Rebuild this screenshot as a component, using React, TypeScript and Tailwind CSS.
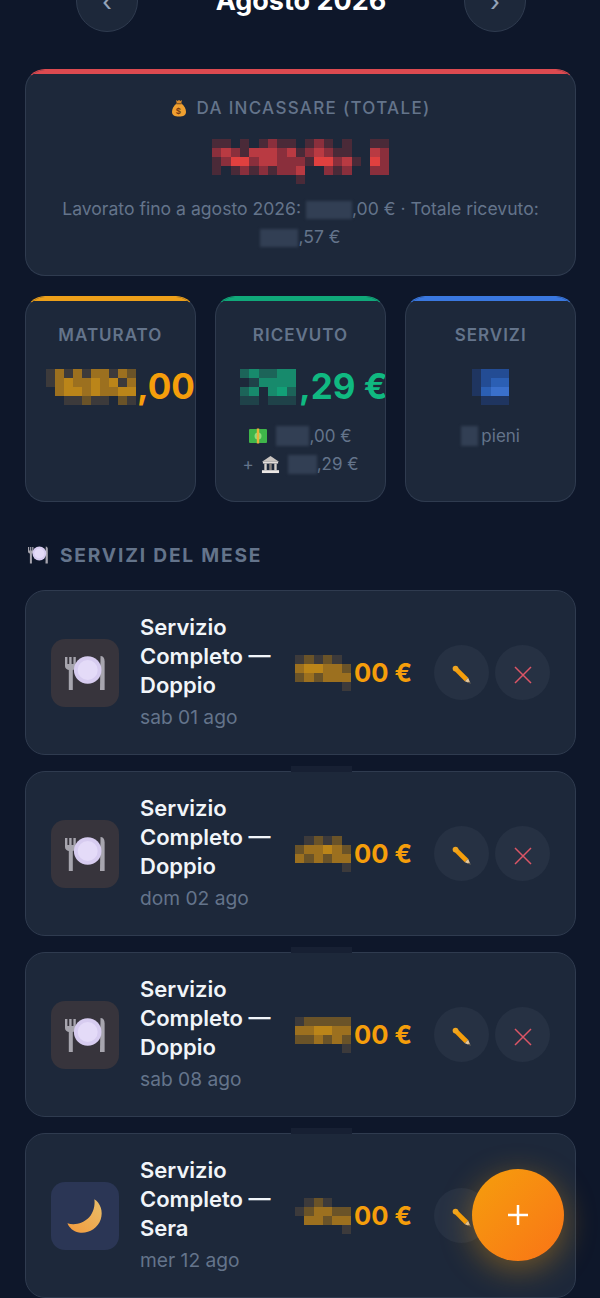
const orange = ["transparent", "#3c3a3b", "#6a5328", "#9c701f", "#bb8519"];
const red = ["transparent", "#4a2a38", "#8a2f3c", "#b93a42", "#e0403f"];
const green = ["transparent", "#1f4249", "#1c6459", "#178a6c", "#12a077"];
const blue = ["transparent", "#1f3560", "#234c94", "#2b5fb4", "#3a70cc"];

function Pixels({ rows, palette, narrow }: { rows: string[]; palette: string[]; narrow?: boolean }) {
  return (
    <span className="inline-flex flex-col align-middle blur-[0.4px]">
      {rows.map((row, i) => (
        <span key={i} className="flex">
          {row.split("").map((c, j) => (
            <span key={j} className={narrow ? "w-[9px] h-[9px]" : "w-[9.3px] h-[9px]"} style={{ backgroundColor: palette[Number(c)] }} />
          ))}
        </span>
      ))}
    </span>
  );
}

function Mask({ className }: { className: string }) {
  return <span className={`inline-block align-middle bg-[#323f54] blur-[1.5px] ${className}`} />;
}

function MoneyBag() {
  return (
    <svg viewBox="0 0 16 18" className="w-[16px] h-[18px] inline-block align-middle">
      <path d="M5.5 4.5C2.5 7 1 10 1 13c0 3.200 2.500 4.500 7 4.500s7-1.300 7-4.500c0-3-1.500-6-4.500-8.500z" fill="#f0a030" />
      <path d="M5 1l1.500 1L8 1l1.500 1L11 1l-.8 3.500H5.800z" fill="#d98a2b" />
      <rect x="5.300" y="4" width="5.400" height="1.300" fill="#8a5a20" />
      <text x="8" y="15" textAnchor="middle" fontSize="8" fontWeight="700" fill="#7a3d10">$</text>
    </svg>
  );
}

function Banknote() {
  return (
    <svg viewBox="0 0 18 16" className="w-[18px] h-[16px] inline-block align-middle">
      <rect x="0" y="1" width="18" height="14" rx="1" fill="#3fb54a" />
      <circle cx="9" cy="8" r="3.500" fill="#8fdc7c" />
      <rect x="7.800" y="0.500" width="2.400" height="15" fill="#e8b23a" />
    </svg>
  );
}

function Bank() {
  return (
    <svg viewBox="0 0 20 20" className="w-[19px] h-[19px] inline-block align-middle">
      <path d="M10 1L1 7h18z" fill="#c9c4c0" />
      <rect x="2" y="7" width="16" height="2" fill="#e3dedb" />
      <rect x="3.500" y="9" width="2.500" height="7" fill="#d5d0cc" />
      <rect x="8.700" y="9" width="2.600" height="7" fill="#8a8480" />
      <rect x="14" y="9" width="2.500" height="7" fill="#d5d0cc" />
      <rect x="1" y="16" width="18" height="3" fill="#ece8e5" />
    </svg>
  );
}

function Plate({ className }: { className: string }) {
  return (
    <svg viewBox="0 0 40 34" className={className}>
      <path d="M0 1h2.400v7h1.800V1h2.400v7h1.800V1h2.400v9c0 2-1.200 3.500-3 4v20H3.800V14c-2.400-.5-3.800-2-3.800-4z" fill="#a7a5ae" />
      <path d="M35.500 0c2.700 0 4.100 2 4.100 5v29h-4.600z" fill="#a7a5ae" />
      <circle cx="22.700" cy="14" r="13.800" fill="#d7ccf0" />
      <circle cx="22.700" cy="14" r="10" fill="#e4dbf8" />
    </svg>
  );
}

function Moon() {
  return (
    <svg viewBox="75 85 125 120" className="w-[40px] h-[38px]">
      <defs>
        <linearGradient id="moon" x1="1" y1="0" x2="0" y2="1">
          <stop offset="0" stopColor="#e9bf6a" />
          <stop offset="1" stopColor="#f49a3c" />
        </linearGradient>
      </defs>
      <path d="M167 92C186 104 196 130 187 156C177 186 146 202 118 197C100 194 88 182 82 168C105 176 132 168 150 150C164 134 170 112 167 92z" fill="url(#moon)" />
    </svg>
  );
}

function Pencil() {
  return (
    <svg viewBox="0 0 20 20" className="w-[19px] h-[19px]">
      <path d="M2.500 6L6 2.500L17 13.500L13.500 17z" fill="#f59e0b" />
      <path d="M13.500 17L17 13.500L19.500 19.500z" fill="#e8c89a" />
      <path d="M17.800 17.300L19.500 19.500L17 18.700z" fill="#3f3a35" />
      <circle cx="3.700" cy="3.700" r="3" fill="#f0a520" />
    </svg>
  );
}

function Cross() {
  return (
    <svg viewBox="0 0 18 18" className="w-[18px] h-[18px]">
      <path d="M1 1l16 16M17 1L1 17" stroke="#dc5566" strokeWidth="1.500" fill="none" />
    </svg>
  );
}

const servizi = [
  {
    nome: "Doppio",
    data: "sab 01 ago",
    pixels: ["121210", "344332", "232333", "000001"],
  },
  {
    nome: "Doppio",
    data: "dom 02 ago",
    pixels: ["012120", "233432", "323233", "000001"],
  },
  {
    nome: "Doppio",
    data: "sab 08 ago",
    pixels: ["122222", "334433", "223232", "000001"],
  },
  {
    nome: "Sera",
    data: "mer 12 ago",
    pixels: ["012100", "123322", "033233", "000001"],
  },
];

function App() {
  return (
    <div className="relative h-[1298px] overflow-hidden bg-[#0e172a] font-['Inter',sans-serif]">
      <div className="-mt-[30px] pl-[25px] pr-[24px]">
        {/* header mese */}
        <div className="flex items-center justify-between pl-[51px] pr-[50px]">
          <button className="w-[62px] h-[62px] rounded-full bg-[#1d283a] border border-[#2f3b4f] text-[#94a3b8] text-[26px]">‹</button>
          <h1 className="text-[27px] font-bold text-white">Agosto 2026</h1>
          <button className="w-[62px] h-[62px] rounded-full bg-[#1d283a] border border-[#2f3b4f] text-[#94a3b8] text-[26px]">›</button>
        </div>

        {/* totale */}
        <div className="relative mt-[37px] h-[207px] overflow-hidden rounded-[20px] bg-[#1d283a] border border-[#2f3b4f] border-t-[#dc4a50] px-[25px] pt-[26px] text-center">
          <div className="absolute inset-x-0 top-0 h-[4px] bg-[#dc4a50]" />
          <p className="flex items-center justify-center gap-[10px] text-[17px] leading-[24px] font-medium tracking-[1.300px] text-[#64748b]">
            <MoneyBag />
            DA INCASSARE (TOTALE)
          </p>
          <div className="mt-[19px] h-[56px]">
            <Pixels
              palette={red}
              rows={["1101012110121010011", "2321333231232110032", "1244233222144231042", "1012121223002120022", "0000000001000000000"]}
            />
          </div>
          <p className="text-[17.600px] leading-[28px] text-[#64748b]">
            Lavorato fino a agosto 2026: <Mask className="w-[46px] h-[18px]" />,00 € · Totale ricevuto: <Mask className="w-[38px] h-[18px]" />,57 €
          </p>
        </div>

        {/* riquadri */}
        <div className="mt-[20px] grid grid-cols-3 gap-[19.500px]">
          <div className="relative h-[206px] overflow-hidden rounded-[20px] bg-[#1d283a] border border-[#2f3b4f] border-t-[#eda01a] pt-[26px] text-center">
            <div className="absolute inset-x-0 top-0 h-[4px] bg-[#eda01a]" />
            <p className="text-[17px] leading-[24px] font-semibold tracking-[1px] text-[#64748b]">MATURATO</p>
            <div className="mt-[17px] flex items-center whitespace-nowrap pl-[20px] text-[35px] leading-[45px] font-bold text-[#f59e0b]">
              <Pixels narrow palette={orange} rows={["1313133132", "1343343413", "0344343344", "0011211021"]} />
              <span className="ml-[1px]">,00</span>
            </div>
          </div>

          <div className="relative h-[206px] overflow-hidden rounded-[20px] bg-[#1d283a] border border-[#2f3b4f] border-t-[#10a97a] pt-[26px] text-center">
            <div className="absolute inset-x-0 top-0 h-[4px] bg-[#10a97a]" />
            <p className="text-[17px] leading-[24px] font-semibold tracking-[1px] text-[#64748b]">RICEVUTO</p>
            <div className="mt-[17px] flex items-center whitespace-nowrap pl-[24px] text-[35px] leading-[45px] font-bold text-[#10b981]">
              <Pixels palette={green} rows={["232233", "013333", "230342", "110111"]} />
              <span className="ml-[3px]">,29 €</span>
            </div>
            <p className="mt-[13px] flex items-center justify-center text-[17px] leading-[28px] text-[#64748b]">
              <Banknote />
              <Mask className="ml-[9px] w-[33px] h-[20px]" />
              ,00 €
            </p>
            <p className="flex items-center justify-center text-[17px] leading-[28px] text-[#64748b]">
              <span className="mr-[7px]">+</span>
              <Bank />
              <Mask className="ml-[8px] w-[29px] h-[19px]" />
              ,29 €
            </p>
          </div>

          <div className="relative h-[206px] overflow-hidden rounded-[20px] bg-[#1d283a] border border-[#2f3b4f] border-t-[#3a78e0] pt-[26px] text-center">
            <div className="absolute inset-x-0 top-0 h-[4px] bg-[#3a78e0]" />
            <p className="text-[17px] leading-[24px] font-semibold tracking-[1px] text-[#64748b]">SERVIZI</p>
            <div className="mt-[17px] flex h-[45px] items-center justify-center">
              <Pixels palette={blue} rows={["1222", "1233", "1344", "0111"]} />
            </div>
            <p className="mt-[13px] flex items-center justify-center text-[17px] leading-[28px] text-[#64748b]">
              <Mask className="mr-[3px] w-[17px] h-[20px]" />
              pieni
            </p>
          </div>
        </div>

        {/* lista */}
        <h2 className="mt-[40px] flex items-center gap-[12px] pl-[3px] text-[19.200px] leading-[26px] font-bold tracking-[1.800px] text-[#64748b]">
          <Plate className="w-[20px] h-[18px]" />
          SERVIZI DEL MESE
        </h2>

        <div className="mt-[22px] flex flex-col gap-[16px]">
          {servizi.map((s, i) => (
            <div key={i} className="relative flex h-[165px] shrink-0 items-center rounded-[20px] bg-[#1d283a] border border-[#2f3b4f] pl-[25px] pr-[25px]">
              {i > 0 && <div className="absolute -top-[6px] left-[265px] w-[61px] h-[6px] bg-[#172033]" />}
              <div className={`flex w-[68px] h-[68px] shrink-0 items-center justify-center rounded-[14px] ${s.nome === "Sera" ? "bg-[#2b3655]" : "bg-[#37343c]"}`}>
                {s.nome === "Sera" ? <Moon /> : <Plate className="w-[40px] h-[34px]" />}
              </div>
              <div className="ml-[21px] min-w-0 flex-1 -mt-[1px]">
                <p className="text-[22px] leading-[29px] font-semibold text-[#f1f5f9]">
                  Servizio Completo — {s.nome}
                </p>
                <p className="mt-[4px] text-[19.200px] leading-[27px] text-[#64748b]">{s.data}</p>
              </div>
              <div className="flex shrink-0 items-center whitespace-nowrap text-[25.600px] leading-[30px] font-bold text-[#f59e0b]">
                <Pixels palette={orange} rows={s.pixels} />
                <span className="ml-[3px]">00 €</span>
              </div>
              <div className="ml-[22px] flex shrink-0 gap-[6px]">
                <button className="flex w-[55px] h-[55px] items-center justify-center rounded-full bg-[#263143] pt-[4px]">
                  <Pencil />
                </button>
                <button className="flex w-[55px] h-[55px] items-center justify-center rounded-full bg-[#263143] pt-[4px]">
                  <Cross />
                </button>
              </div>
            </div>
          ))}
        </div>
      </div>

      {/* pulsante aggiungi */}
      <button className="absolute right-[36px] bottom-[37px] flex w-[92px] h-[92px] items-center justify-center rounded-full bg-gradient-to-br from-[#f59e0b] to-[#f97316] shadow-[0_8px_32px_rgba(245,158,11,0.4)]">
        <svg viewBox="0 0 22 22" className="w-[22px] h-[22px]">
          <path d="M11 1v20M1 11h20" stroke="#fff" strokeWidth="2.500" fill="none" />
        </svg>
      </button>
    </div>
  );
}

export default App;
